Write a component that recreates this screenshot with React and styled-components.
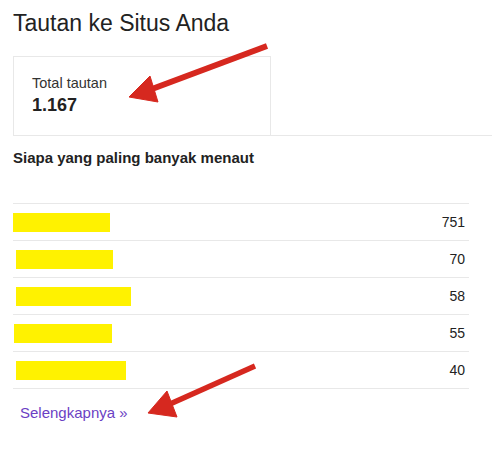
import React from "react";
import styled, { createGlobalStyle } from "styled-components";

const Global = createGlobalStyle`
  html, body { margin: 0; padding: 0; background: #fff; }
  body { font-family: "Liberation Sans", Arial, sans-serif; }
`;

const Page = styled.div`
  position: relative;
  width: 492px;
  height: 467px;
  overflow: hidden;
  padding: 9px 0 0 13px;
  box-sizing: border-box;
  color: #222;
`;

const Title = styled.h1`
  margin: 0;
  font-size: 23px;
  line-height: 28px;
  font-weight: 400;
  color: #222;
`;

const CardRow = styled.div`
  margin-top: 19px;
  display: flex;
  border-bottom: 1px solid #e8e8e8;
`;

const Card = styled.div`
  width: 258px;
  height: 79px;
  box-sizing: border-box;
  border: 1px solid #e8e8e8;
  border-bottom: none;
  padding: 18px 0 0 18px;
`;

const Label = styled.div`
  font-size: 14.5px;
  line-height: 17px;
  color: #333;
`;

const Value = styled.div`
  margin-top: 2px;
  font-size: 18px;
  line-height: 22px;
  font-weight: 700;
  color: #222;
`;

const SectionTitle = styled.h2`
  margin: 13px 0 0;
  font-size: 15px;
  line-height: 18px;
  font-weight: 700;
  color: #222;
`;

const Table = styled.div`
  margin-top: 36px;
  width: 456px;
  border-top: 1px solid #e8e8e8;
`;

const Row = styled.div`
  display: flex;
  align-items: center;
  justify-content: space-between;
  height: 36px;
  border-bottom: 1px solid #e8e8e8;
  padding-right: 4px;
`;

const Redacted = styled.span`
  display: block;
  height: 19px;
  margin-left: ${(p) => p.$offset}px;
  width: ${(p) => p.$w}px;
  background: #fff200;
`;

const Count = styled.span`
  font-size: 14px;
  color: #222;
`;

const More = styled.a`
  display: inline-block;
  margin: 15px 0 0 7px;
  font-size: 15px;
  line-height: 18px;
  color: #6b3fc4;
  text-decoration: none;
`;

const Overlay = styled.svg`
  position: absolute;
  left: 0;
  top: 0;
  pointer-events: none;
`;

const rows = [
  { offset: 0, w: 97, n: "751" },
  { offset: 3, w: 97, n: "70" },
  { offset: 3, w: 115, n: "58" },
  { offset: 1, w: 98, n: "55" },
  { offset: 3, w: 110, n: "40" },
];

export default function App() {
  return (
    <>
      <Global />
      <Page>
        <Title>Tautan ke Situs Anda</Title>
        <CardRow>
          <Card>
            <Label>Total tautan</Label>
            <Value>1.167</Value>
          </Card>
        </CardRow>
        <SectionTitle>Siapa yang paling banyak menaut</SectionTitle>
        <Table>
          {rows.map((r, i) => (
            <Row key={i}>
              <Redacted $offset={r.offset} $w={r.w} />
              <Count>{r.n}</Count>
            </Row>
          ))}
        </Table>
        <More href="#">Selengkapnya »</More>
        <Overlay width="492" height="467" viewBox="0 0 492 467">
          <g fill="#d6281f" stroke="#d6281f">
            <line x1="267" y1="46" x2="152" y2="89" strokeWidth="6" />
            <polygon points="129,97 150,76 158,102" strokeWidth="1" strokeLinejoin="round" />
            <line x1="255" y1="366" x2="170" y2="404" strokeWidth="5.5" />
            <polygon points="148,413 167,391 177,417" strokeWidth="1" strokeLinejoin="round" />
          </g>
        </Overlay>
      </Page>
    </>
  );
}
